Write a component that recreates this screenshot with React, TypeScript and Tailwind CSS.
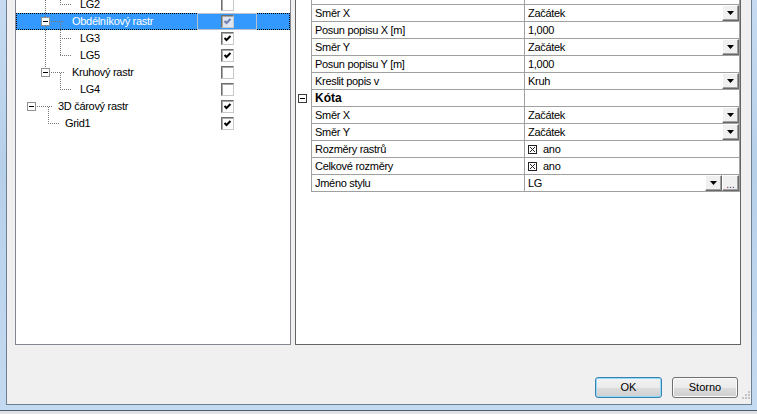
import React from "react";

const GRID = "border-[#a0a0a0]";

function Check({ checked, dim }: { checked: boolean; dim?: boolean }) {
  return (
    <div
      className={`w-[13px] h-[13px] border border-t-[#6e6e6e] border-l-[#6e6e6e] border-r-[#c9c9c9] border-b-[#c9c9c9] shadow-[inset_1px_1px_0_#a8a8a8] flex items-center justify-center ${
        dim ? "bg-[#dfe6f0]" : "bg-white"
      }`}
    >
      {checked && (
        <svg width="9" height="9" viewBox="0 0 9 9">
          <path
            d="M1.5 4 L3.5 6 L7.5 2"
            fill="none"
            stroke={dim ? "#6f7fb5" : "#000"}
            strokeWidth="2"
          />
        </svg>
      )}
    </div>
  );
}

type TRow = { label: string; pad: string; checked: boolean; selected?: boolean };

const treeRows: TRow[] = [
  { label: "LG2", pad: "pl-[64px]", checked: false },
  { label: "Obdélníkový rastr", pad: "pl-[55px]", checked: true, selected: true },
  { label: "LG3", pad: "pl-[64px]", checked: true },
  { label: "LG5", pad: "pl-[64px]", checked: true },
  { label: "Kruhový rastr", pad: "pl-[56px]", checked: false },
  { label: "LG4", pad: "pl-[64px]", checked: false },
  { label: "3D čárový rastr", pad: "pl-[42px]", checked: true },
  { label: "Grid1", pad: "pl-[49px]", checked: true },
];

function TreeLines() {
  const dot = { stroke: "#777", strokeWidth: 1, strokeDasharray: "1 1" };
  const box = (x: number, y: number) => (
    <g>
      <rect x={x + 0.5} y={y + 0.5} width="8" height="8" fill="#fff" stroke="#919191" />
      <line x1={x + 2} y1={y + 4.5} x2={x + 7} y2={y + 4.5} stroke="#000" />
    </g>
  );
  return (
    <svg className="absolute left-0 top-0 pointer-events-none z-10" width="200" height="140">
      <line x1="29.5" y1="0" x2="29.5" y2="72" {...dot} />
      <line x1="44.5" y1="0" x2="44.5" y2="8" {...dot} />
      <line x1="44" y1="8.5" x2="56" y2="8.5" {...dot} />
      <line x1="33" y1="25.5" x2="49" y2="25.5" {...dot} />
      <line x1="44.5" y1="26" x2="44.5" y2="60" {...dot} />
      <line x1="44" y1="42.5" x2="56" y2="42.5" {...dot} />
      <line x1="44" y1="59.5" x2="56" y2="59.5" {...dot} />
      <line x1="33" y1="76.5" x2="49" y2="76.5" {...dot} />
      <line x1="44.5" y1="77" x2="44.5" y2="94" {...dot} />
      <line x1="44" y1="93.5" x2="56" y2="93.5" {...dot} />
      <line x1="19" y1="110.5" x2="36" y2="110.5" {...dot} />
      <line x1="32.5" y1="111" x2="32.5" y2="128" {...dot} />
      <line x1="32" y1="127.5" x2="44" y2="127.5" {...dot} />
      {box(25, 21)}
      {box(25, 72)}
      {box(11, 106)}
    </svg>
  );
}

function TreeRowView({ r }: { r: TRow }) {
  if (r.selected) {
    return (
      <div className="flex h-[17px] bg-[#3399ff] text-white">
        <div className={`w-[181px] border-l border-y border-dotted border-black flex items-center ${r.pad}`}>
          {r.label}
        </div>
        <div className="w-[60px] border border-[#b9c3cf] flex items-center justify-center">
          <Check checked dim />
        </div>
        <div className="flex-1 border-r border-y border-dotted border-black" />
      </div>
    );
  }
  return (
    <div className="flex h-[17px]">
      <div className={`w-[181px] flex items-center ${r.pad}`}>{r.label}</div>
      <div className="w-[60px] flex items-center justify-center">
        <Check checked={r.checked} />
      </div>
      <div className="flex-1" />
    </div>
  );
}

function Arrow() {
  return (
    <svg width="7" height="4" viewBox="0 0 7 4">
      <path d="M0 0 H7 L3.5 4 Z" fill="#000" />
    </svg>
  );
}

function DropBtn({ dots }: { dots?: boolean }) {
  return (
    <div className="w-[17px] h-[16px] bg-[#f0f0f0] border border-t-white border-l-white border-r-[#696969] border-b-[#696969] shadow-[inset_-1px_-1px_0_#a0a0a0] flex items-center justify-center">
      {dots ? (
        <span className="text-[#4b2a6b] text-[10px] leading-none mt-[3px] tracking-normal">...</span>
      ) : (
        <Arrow />
      )}
    </div>
  );
}

function XBox() {
  return (
    <svg width="9" height="9" viewBox="0 0 9 9">
      <rect x="0.5" y="0.5" width="8" height="8" fill="#fff" stroke="#222" />
      <path d="M2 2 L7 7 M7 2 L2 7" stroke="#222" strokeWidth="1" />
    </svg>
  );
}

type GRow = {
  label: string;
  value?: string;
  drop?: boolean;
  dots?: boolean;
  xbox?: boolean;
  cat?: boolean;
};

const gridRows: GRow[] = [
  { label: "", value: "" },
  { label: "Směr X", value: "Začátek", drop: true },
  { label: "Posun popisu X [m]", value: "1,000" },
  { label: "Směr Y", value: "Začátek", drop: true },
  { label: "Posun popisu Y [m]", value: "1,000" },
  { label: "Kreslit popis v", value: "Kruh", drop: true },
  { label: "Kóta", cat: true },
  { label: "Směr X", value: "Začátek", drop: true },
  { label: "Směr Y", value: "Začátek", drop: true },
  { label: "Rozměry rastrů", value: "ano", xbox: true },
  { label: "Celkové rozměry", value: "ano", xbox: true },
  { label: "Jméno stylu", value: "LG", drop: true, dots: true },
];

function GridRowView({ r }: { r: GRow }) {
  return (
    <div className="flex h-[17px]">
      <div className="w-[15px] flex items-center pl-[2px]">
        {r.cat && (
          <svg width="9" height="9" viewBox="0 0 9 9">
            <rect x="0.5" y="0.5" width="8" height="8" fill="#fff" stroke="#3a3a3a" />
            <line x1="2" y1="4.5" x2="7" y2="4.5" stroke="#000" />
          </svg>
        )}
      </div>
      <div className={`flex flex-1 border-l border-r border-b ${GRID}`}>
        <div
          className={`w-[213px] border-r ${GRID} pl-[3px] flex items-center ${
            r.cat ? "font-bold text-[12px] tracking-normal" : ""
          }`}
        >
          {r.label}
        </div>
        <div className="flex-1 flex items-center pl-[3px]">
          {r.xbox && (
            <span className="mr-[6px] flex">
              <XBox />
            </span>
          )}
          <span>{r.value}</span>
          {r.drop && (
            <div className="ml-auto flex">
              <DropBtn />
              {r.dots && <DropBtn dots />}
            </div>
          )}
        </div>
      </div>
    </div>
  );
}

function Btn({ label, def }: { label: string; def?: boolean }) {
  return (
    <div
      className={`h-[21px] rounded-[3px] border flex items-center justify-center tracking-normal bg-[linear-gradient(to_bottom,#f2f2f2_0%,#ebebeb_50%,#dddddd_51%,#cfcfcf_100%)] ${
        def
          ? "w-[67px] border-[#3c7fb1] shadow-[inset_0_0_0_1px_#8fdcf7]"
          : "w-[66px] border-[#707070] shadow-[inset_0_0_0_1px_#fcfcfc]"
      }`}
    >
      {label}
    </div>
  );
}

export default function App() {
  return (
    <div className="w-[757px] h-[414px] overflow-hidden flex flex-col bg-[linear-gradient(to_bottom,#c6dbf1,#b7d0ea_40%,#c4daf1)] font-['Liberation_Sans',Arial,sans-serif] text-[11px] tracking-[-0.3px] leading-none text-black">
      <div className="ml-[6px] mr-[5px] h-[405px] shrink-0 bg-[#f0f0f0] border-l border-r border-b border-[#6f7f92] flex flex-col">
        <div className="mt-[-20px] h-[365px] flex pl-[8px] pr-[10px] gap-[4px]">
          <div className="w-[276px] bg-white border border-[#828790] pt-[15px]">
            <div className="relative">
              <TreeLines />
              {treeRows.map((r, i) => (
                <TreeRowView key={i} r={r} />
              ))}
            </div>
          </div>
          <div className="flex-1 bg-white border border-[#646464] pt-[7px]">
            {gridRows.map((r, i) => (
              <GridRowView key={i} r={r} />
            ))}
          </div>
        </div>
        <div className="mt-[32px] flex justify-end gap-[10px] pr-[13px] relative">
          <Btn label="OK" def />
          <Btn label="Storno" />
          <svg className="absolute right-[1px] top-[14px]" width="8" height="8" viewBox="0 0 8 8">
            {[
              [6, 0],
              [6, 3],
              [3, 3],
              [6, 6],
              [3, 6],
              [0, 6],
            ].map(([x, y], i) => (
              <rect key={i} x={x} y={y} width="2" height="2" fill="#c4c4c4" />
            ))}
          </svg>
        </div>
      </div>
      <div className="h-[5px] shrink-0" />
      <div className="flex-1 border-t border-[#4d5b6e] bg-[#dfe3e8]" />
    </div>
  );
}
